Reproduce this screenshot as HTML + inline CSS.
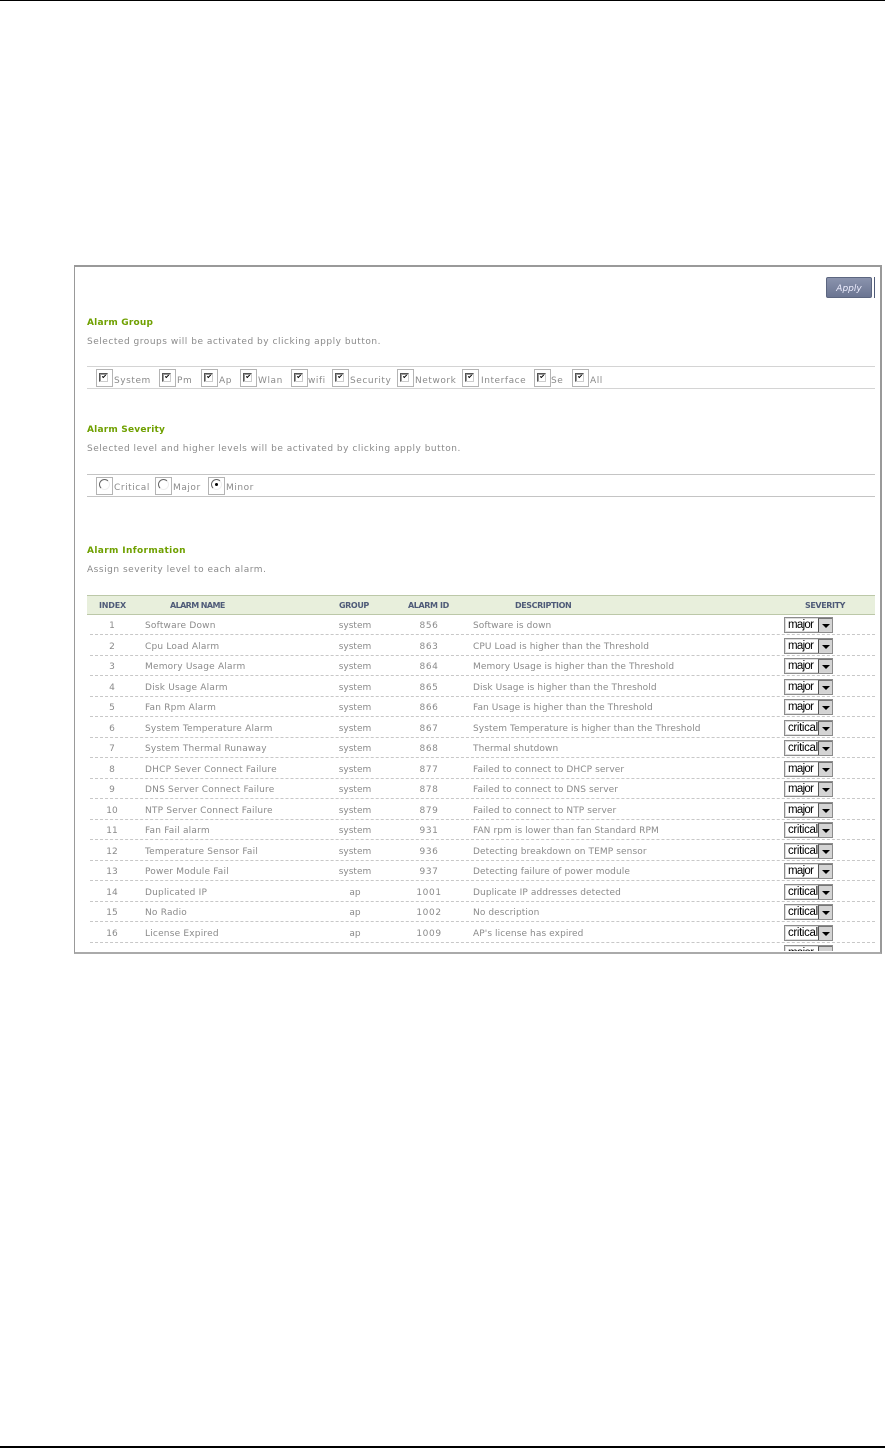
<!DOCTYPE html>
<html><head><meta charset="utf-8"><style>
html,body{margin:0;padding:0;background:#fff}
body{position:relative;width:885px;height:1449px;overflow:hidden;font-family:"DejaVu Sans","Liberation Sans",sans-serif;font-size:9px;color:#8a8a8a}
.a{position:absolute;white-space:nowrap}
.t{position:absolute;white-space:nowrap;line-height:12px;letter-spacing:.52px}
.h{position:absolute;white-space:nowrap;line-height:12px;left:87px;font-weight:bold;color:#6fa000;font-size:9px;letter-spacing:.2px}
.l{position:absolute;left:87px;width:788px;height:1px;background:#d4d4d4}
.b{position:absolute;box-sizing:border-box;width:17px;height:18px;border:1px solid #b4b4b4;background:#fff}
.b i{position:absolute;left:2px;top:3px;width:7px;height:7px;border:1px solid #555;border-right-color:#ccc;border-bottom-color:#ccc;background:#fff;box-shadow:inset 1px 1px 0 #999}
.b i:after{content:"";position:absolute;left:2px;top:1px;width:3px;height:1px;border-left:1px solid #000;border-bottom:1px solid #000;transform:rotate(-45deg)}
.b u{position:absolute;left:2px;top:1px;width:9px;height:9px;border:1px solid;border-color:#666 #eee #eee #666;border-radius:50%;background:#fff}
.b u.on:after{content:"";position:absolute;left:3px;top:3px;width:3px;height:3px;border-radius:50%;background:#000}
.g{position:absolute;line-height:12px;white-space:nowrap;letter-spacing:.55px}
#clip{position:absolute;left:0;top:0;width:885px;height:951px;overflow:hidden}
.r{position:absolute;left:0;width:885px;height:20px}
.r:after{content:"";position:absolute;left:90px;width:785px;top:17px;border-top:1px dashed #c8c8c8}
.r span{position:absolute;top:3px;line-height:12px;white-space:nowrap}
.i{left:82px;width:60px;text-align:center}
.n{left:145px;letter-spacing:.2px}
.p{left:325px;width:60px;text-align:center}
.d{left:399px;width:60px;text-align:center;letter-spacing:.6px}
.e{left:473px;letter-spacing:.09px}
.r b{position:absolute;box-sizing:border-box;left:784px;top:0;width:49px;height:16px;border:1px solid #8c8c8c;box-shadow:inset 0 0 0 1px #ddd;background:#fff;font:11.5px/14px "Liberation Sans",sans-serif;color:#000;padding-left:3px;overflow:hidden;white-space:nowrap;letter-spacing:-.35px}
.r b.m{letter-spacing:-.7px}
.r b:after{content:"";position:absolute;right:0;top:0;width:14px;height:14px;background:#d4d4d4;border-left:1px solid #555;border-top:1px solid #777;box-sizing:border-box}
.r em{position:absolute;left:822px;top:7px;width:0;height:0;border-left:4px solid transparent;border-right:4px solid transparent;border-top:4px solid #000;z-index:2}
.th{position:absolute;top:600px;line-height:12px;font-weight:bold;font-size:8px;color:#4f5b78;white-space:nowrap;letter-spacing:-.3px}
</style></head><body>
<div class="a" style="left:0;top:0;width:885px;height:1px;background:#000"></div>
<div class="a" style="left:0;top:1446px;width:885px;height:2px;background:#000"></div>
<div class="a" style="left:74px;top:265px;width:808px;height:689px;box-sizing:border-box;border:2px solid #999;border-left-width:1px;border-bottom-color:#aaa"></div>

<div class="a" style="left:826px;top:277px;width:46px;height:21px;box-sizing:border-box;border:1px solid #5c6680;border-radius:2px;background:linear-gradient(#8a93ad,#6b7592);color:#eef;font:italic 9px/22px 'DejaVu Sans',sans-serif;text-align:center">Apply</div>
<div class="a" style="left:874px;top:277px;width:1px;height:21px;background:#4f5b78"></div>

<div class="h" style="top:317px">Alarm Group</div>
<div class="t" style="left:87px;top:336px">Selected groups will be activated by clicking apply button.</div>
<div class="l" style="top:366px"></div><div class="l" style="top:388px"></div>
<div class="b" style="left:96px;top:369px"><i></i></div><div class="g" style="left:114px;top:375px">System</div>
<div class="b" style="left:159px;top:369px"><i></i></div><div class="g" style="left:177px;top:375px">Pm</div>
<div class="b" style="left:201px;top:369px"><i></i></div><div class="g" style="left:219px;top:375px">Ap</div>
<div class="b" style="left:240px;top:369px"><i></i></div><div class="g" style="left:258px;top:375px">Wlan</div>
<div class="b" style="left:291px;top:369px"><i></i></div><div class="g" style="left:308px;top:375px">wifi</div>
<div class="b" style="left:332px;top:369px"><i></i></div><div class="g" style="left:350px;top:375px">Security</div>
<div class="b" style="left:397px;top:369px"><i></i></div><div class="g" style="left:415px;top:375px">Network</div>
<div class="b" style="left:462px;top:369px"><i></i></div><div class="g" style="left:481px;top:375px">Interface</div>
<div class="b" style="left:534px;top:369px"><i></i></div><div class="g" style="left:551px;top:375px">Se</div>
<div class="b" style="left:572px;top:369px"><i></i></div><div class="g" style="left:590px;top:375px">All</div>

<div class="h" style="top:424px">Alarm Severity</div>
<div class="t" style="left:87px;top:443px">Selected level and higher levels will be activated by clicking apply button.</div>
<div class="l" style="top:474px;background:#c4c4c4"></div><div class="l" style="top:496px;background:#c4c4c4"></div>
<div class="b" style="left:96px;top:477px"><u></u></div><div class="g" style="left:114px;top:482px">Critical</div>
<div class="b" style="left:155px;top:477px"><u></u></div><div class="g" style="left:173px;top:482px">Major</div>
<div class="b" style="left:208px;top:477px"><u class="on"></u></div><div class="g" style="left:226px;top:482px">Minor</div>

<div class="h" style="top:545px;letter-spacing:.36px">Alarm Information</div>
<div class="t" style="left:87px;top:564px">Assign severity level to each alarm.</div>

<div class="a" style="left:87px;top:595px;width:788px;height:20px;box-sizing:border-box;background:#e8efdc;border-top:1px solid #bcc8a8;border-bottom:1px solid #bcc8a8"></div>
<div class="th" style="left:99px;letter-spacing:-.2px">INDEX</div>
<div class="th" style="left:170px;letter-spacing:-.6px">ALARM NAME</div>
<div class="th" style="left:339px;letter-spacing:-.4px">GROUP</div>
<div class="th" style="left:408px;letter-spacing:-.4px">ALARM ID</div>
<div class="th" style="left:515px;letter-spacing:-.4px">DESCRIPTION</div>
<div class="th" style="left:805px;letter-spacing:-.4px">SEVERITY</div>

<div id="clip">
<div class="r" style="top:617px"><span class="i">1</span><span class="n">Software Down</span><span class="p">system</span><span class="d">856</span><span class="e">Software is down</span><b class="m">major</b><em></em></div>
<div class="r" style="top:638px"><span class="i">2</span><span class="n">Cpu Load Alarm</span><span class="p">system</span><span class="d">863</span><span class="e">CPU Load is higher than the Threshold</span><b class="m">major</b><em></em></div>
<div class="r" style="top:658px"><span class="i">3</span><span class="n">Memory Usage Alarm</span><span class="p">system</span><span class="d">864</span><span class="e">Memory Usage is higher than the Threshold</span><b class="m">major</b><em></em></div>
<div class="r" style="top:679px"><span class="i">4</span><span class="n">Disk Usage Alarm</span><span class="p">system</span><span class="d">865</span><span class="e">Disk Usage is higher than the Threshold</span><b class="m">major</b><em></em></div>
<div class="r" style="top:699px"><span class="i">5</span><span class="n">Fan Rpm Alarm</span><span class="p">system</span><span class="d">866</span><span class="e">Fan Usage is higher than the Threshold</span><b class="m">major</b><em></em></div>
<div class="r" style="top:720px"><span class="i">6</span><span class="n">System Temperature Alarm</span><span class="p">system</span><span class="d">867</span><span class="e">System Temperature is higher than the Threshold</span><b>critical</b><em></em></div>
<div class="r" style="top:740px"><span class="i">7</span><span class="n">System Thermal Runaway</span><span class="p">system</span><span class="d">868</span><span class="e">Thermal shutdown</span><b>critical</b><em></em></div>
<div class="r" style="top:761px"><span class="i">8</span><span class="n">DHCP Sever Connect Failure</span><span class="p">system</span><span class="d">877</span><span class="e">Failed to connect to DHCP server</span><b class="m">major</b><em></em></div>
<div class="r" style="top:781px"><span class="i">9</span><span class="n">DNS Server Connect Failure</span><span class="p">system</span><span class="d">878</span><span class="e">Failed to connect to DNS server</span><b class="m">major</b><em></em></div>
<div class="r" style="top:802px"><span class="i">10</span><span class="n">NTP Server Connect Failure</span><span class="p">system</span><span class="d">879</span><span class="e">Failed to connect to NTP server</span><b class="m">major</b><em></em></div>
<div class="r" style="top:822px"><span class="i">11</span><span class="n">Fan Fail alarm</span><span class="p">system</span><span class="d">931</span><span class="e">FAN rpm is lower than fan Standard RPM</span><b>critical</b><em></em></div>
<div class="r" style="top:843px"><span class="i">12</span><span class="n">Temperature Sensor Fail</span><span class="p">system</span><span class="d">936</span><span class="e">Detecting breakdown on TEMP sensor</span><b>critical</b><em></em></div>
<div class="r" style="top:863px"><span class="i">13</span><span class="n">Power Module Fail</span><span class="p">system</span><span class="d">937</span><span class="e">Detecting failure of power module</span><b class="m">major</b><em></em></div>
<div class="r" style="top:884px"><span class="i">14</span><span class="n">Duplicated IP</span><span class="p">ap</span><span class="d">1001</span><span class="e">Duplicate IP addresses detected</span><b>critical</b><em></em></div>
<div class="r" style="top:904px"><span class="i">15</span><span class="n">No Radio</span><span class="p">ap</span><span class="d">1002</span><span class="e">No description</span><b>critical</b><em></em></div>
<div class="r" style="top:925px"><span class="i">16</span><span class="n">License Expired</span><span class="p">ap</span><span class="d">1009</span><span class="e">AP's license has expired</span><b>critical</b><em></em></div>
<div class="r" style="top:945px"><b class="m">major</b></div>
</div>
</body></html>
